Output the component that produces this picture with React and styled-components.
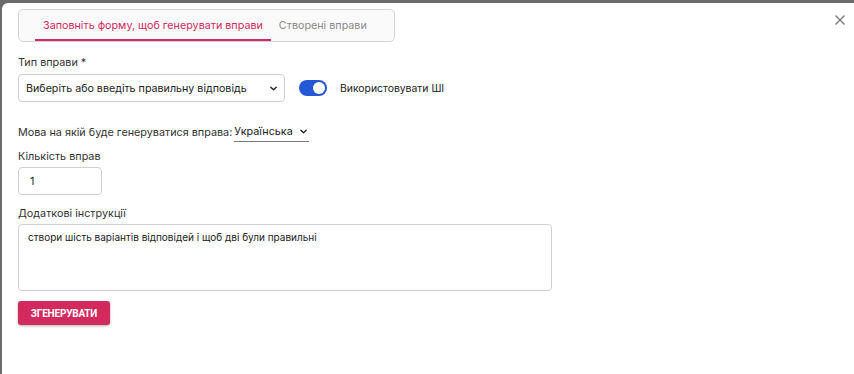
import React, { useState } from 'react';
import styled, { createGlobalStyle } from 'styled-components';

const GlobalStyle = createGlobalStyle`
  html, body {
    margin: 0;
    padding: 0;
    background: #6b6b6b;
    font-family: Inter, "Noto Sans", sans-serif;
  }
`;

const Backdrop = styled.div`
  width: 854px;
  height: 374px;
  padding: 3px 0 0 2px;
  box-sizing: border-box;
  overflow: hidden;
`;

const Modal = styled.div`
  position: relative;
  height: 100%;
  background: #ffffff;
  border-radius: 6px 0 0 0;
  padding: 6px 16px 0 16px;
  box-sizing: border-box;
  display: flex;
  flex-direction: column;
  align-items: flex-start;
  color: #333;
  font-size: 10.8px;
  white-space: nowrap;
`;

const CloseButton = styled.button`
  position: absolute;
  top: 9px;
  right: 6px;
  border: 0;
  background: transparent;
  padding: 2px;
  cursor: pointer;
  display: flex;
`;

const Tabs = styled.div`
  display: flex;
  width: 377px;
  height: 33px;
  box-sizing: border-box;
  border: 1px solid #d4d4d4;
  border-radius: 5px;
  background: #fafafa;
  padding-left: 16px;
`;

const Tab = styled.div`
  height: 100%;
  display: flex;
  align-items: center;
  padding: 2px 8px 0;
  box-sizing: border-box;
  font-size: 10.75px;
  color: ${(p) => (p.$active ? '#d2295f' : '#8a8a8a')};
  border-bottom: 2px solid ${(p) => (p.$active ? '#d2295f' : 'transparent')};
`;

const Label = styled.div`
  font-size: 10.8px;
  color: #333;
  margin-top: ${(p) => p.$top || 0}px;
  line-height: 15px;
`;

const Row = styled.div`
  display: flex;
  align-items: center;
  margin-top: ${(p) => p.$top || 0}px;
`;

const SelectBox = styled.div`
  width: 267px;
  height: 28px;
  box-sizing: border-box;
  border: 1px solid #cfcfcf;
  border-radius: 4px;
  display: flex;
  align-items: center;
  justify-content: space-between;
  padding: 0 6px 0 7px;
  font-size: 10.7px;
  color: #222;
`;

const Toggle = styled.div`
  width: 28px;
  height: 16px;
  border-radius: 8px;
  background: ${(p) => (p.$on ? '#2557d6' : '#ccc')};
  margin-left: 14px;
  position: relative;
  cursor: pointer;
  &::after {
    content: '';
    position: absolute;
    top: 2px;
    left: ${(p) => (p.$on ? '14px' : '2px')};
    width: 12px;
    height: 12px;
    border-radius: 50%;
    background: #fff;
  }
`;

const ToggleText = styled.span`
  margin-left: 13px;
  font-size: 10.4px;
  color: #222;
`;

const LangSelect = styled.div`
  display: flex;
  align-items: center;
  justify-content: space-between;
  margin-left: 2px;
  width: 75px;
  box-sizing: border-box;
  border-bottom: 1px solid #777;
  padding: 2px 1px 3px 0;
  color: #222;
`;

const NumberInput = styled.div`
  width: 84px;
  height: 28px;
  box-sizing: border-box;
  border: 1px solid #cfcfcf;
  border-radius: 4px;
  display: flex;
  align-items: center;
  padding-left: 11px;
  margin-top: 3px;
  color: #222;
`;

const TextArea = styled.div`
  width: 534px;
  height: 67px;
  box-sizing: border-box;
  border: 1px solid #cfcfcf;
  border-radius: 4px;
  padding: 6px 9px;
  margin-top: 3px;
  color: #222;
  font-size: 10px;
`;

const SubmitButton = styled.button`
  margin-top: 10px;
  width: 92px;
  height: 24px;
  border: 0;
  border-radius: 3px;
  background: #d2295f;
  color: #fff;
  font-family: Roboto, "Liberation Sans", sans-serif;
  font-weight: 700;
  font-size: 10px;
  letter-spacing: -0.2px;
  box-shadow: 0 1px 3px rgba(0, 0, 0, 0.3);
  cursor: pointer;
`;

const ChevronIcon = styled.svg`
  flex-shrink: 0;
`;

const Chevron = () => (
  <ChevronIcon width="9" height="9" viewBox="0 0 10 10" fill="none">
    <path d="M2 3.5 L5 6.5 L8 3.5" stroke="#222" strokeWidth="1.5" strokeLinecap="round" strokeLinejoin="round" />
  </ChevronIcon>
);

export default function App() {
  const [ai, setAi] = useState(true);

  return (
    <>
      <GlobalStyle />
      <Backdrop>
        <Modal>
          <CloseButton aria-label="close">
            <svg width="12" height="12" viewBox="0 0 12 12">
              <path d="M1.5 1.5 L10.5 10.5 M10.5 1.5 L1.5 10.5" stroke="#777" strokeWidth="1.4" />
            </svg>
          </CloseButton>
          <Tabs>
            <Tab $active>Заповніть форму, щоб генерувати вправи</Tab>
            <Tab>Створені вправи</Tab>
          </Tabs>

          <Label $top={13}>Тип вправи *</Label>
          <Row $top={4}>
            <SelectBox>
              <span>Виберіть або введіть правильну відповідь</span>
              <Chevron />
            </SelectBox>
            <Toggle $on={ai} onClick={() => setAi(!ai)} />
            <ToggleText>Використовувати ШІ</ToggleText>
          </Row>

          <Row $top={21}>
            <span>Мова на якій буде генеруватися вправа:</span>
            <LangSelect>
              <span>Українська</span>
              <Chevron />
            </LangSelect>
          </Row>

          <Label $top={7}>Кількість вправ</Label>
          <NumberInput>1</NumberInput>

          <Label $top={11}>Додаткові інструкції</Label>
          <TextArea>створи шість варіантів відповідей і щоб дві були правильні</TextArea>

          <SubmitButton>ЗГЕНЕРУВАТИ</SubmitButton>
        </Modal>
      </Backdrop>
    </>
  );
}
